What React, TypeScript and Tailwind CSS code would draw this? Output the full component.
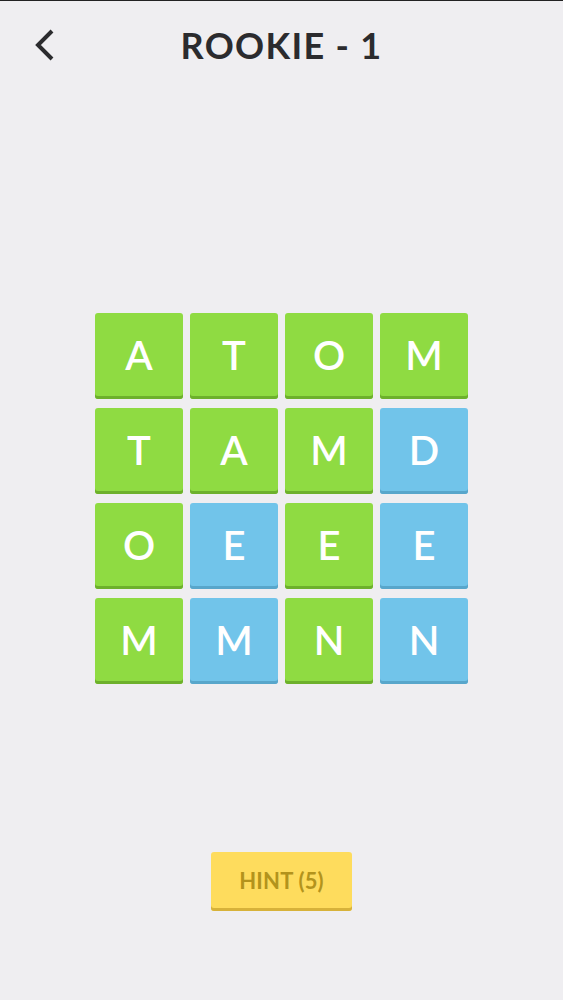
type Tile = { ch: string; blue?: boolean }

const GRID: Tile[][] = [
  [{ ch: 'A' }, { ch: 'T' }, { ch: 'O' }, { ch: 'M' }],
  [{ ch: 'T' }, { ch: 'A' }, { ch: 'M' }, { ch: 'D', blue: true }],
  [{ ch: 'O' }, { ch: 'E', blue: true }, { ch: 'E' }, { ch: 'E', blue: true }],
  [{ ch: 'M' }, { ch: 'M', blue: true }, { ch: 'N' }, { ch: 'N', blue: true }],
]

function LetterTile({ ch, blue }: Tile) {
  return (
    <div
      className={`flex h-[86px] w-[88px] items-center justify-center rounded-[3px] pb-[3px] text-[40px] font-semibold leading-none text-white ${
        blue ? 'bg-[#71c4ea] shadow-[inset_0_-3px_0_#58a6cb]' : 'bg-[#8fdb42] shadow-[inset_0_-3px_0_#6db02c]'
      }`}
    >
      {ch}
    </div>
  )
}

export default function App() {
  return (
    <div
      className="flex min-h-[1000px] flex-col items-center border-t border-[#222] bg-[#efeef1]"
      style={{ fontFamily: 'Lato, "Noto Sans", sans-serif' }}
    >
      {/* Kepala: tombol kembali + judul */}
      <div className="relative flex h-[88px] w-full items-center justify-center">
        <button className="absolute left-[33px] top-[27px] text-[#2b2b2e]" aria-label="Kembali">
          <svg width="22" height="34" viewBox="0 0 22 34" fill="none" stroke="currentColor" strokeWidth="4">
            <polyline points="19,3 5,17 19,31" />
          </svg>
        </button>
        <h1 className="text-[36px] font-bold tracking-[1.3px] text-[#2b2b2e]">ROOKIE - 1</h1>
      </div>

      {/* Papan huruf 4x4 */}
      <div className="mt-[224px] grid grid-cols-4 gap-x-[7px] gap-y-[9px]">
        {GRID.flat().map((t, i) => (
          <LetterTile key={i} {...t} />
        ))}
      </div>

      {/* Tombol petunjuk */}
      <button className="mt-[168px] flex h-[59px] w-[141px] items-center justify-center rounded-[3px] bg-[#fedc5d] pb-[3px] text-[22px] font-bold tracking-[0.2px] text-[#b3931c] shadow-[inset_0_-3px_0_#d7b23a]">
        HINT (5)
      </button>
    </div>
  )
}
